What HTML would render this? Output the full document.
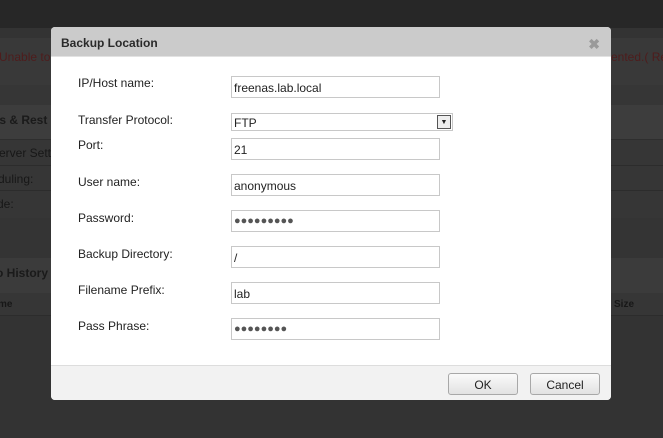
<!DOCTYPE html>
<html><head><style>
*{margin:0;padding:0;box-sizing:border-box}
body{width:663px;height:438px;overflow:hidden;background:#333;font-family:"Liberation Sans",sans-serif;position:relative}
.b{position:absolute;left:0;width:663px}
.t{position:absolute;font-size:12px;color:#171717;white-space:nowrap}
.dlg{position:absolute;left:51px;top:27px;width:560px;height:373px;background:#fff;border-radius:4px;overflow:hidden}
.hd{height:30px;background:#cbcbcb;border-bottom:1px solid #e2e2e2;font-weight:bold;font-size:12px;color:#2a2a2a;padding:9px 0 0 10px}
.x{position:absolute;right:11px;top:9px;color:#9a9a9a;font-size:14px;font-weight:bold}
.l{position:absolute;left:27px;font-size:12px;color:#222}
.i{position:absolute;left:180px;width:209px;height:22px;border:1px solid #c8c8c8;font-size:12px;color:#222;padding:4px 0 0 2px}
.ft{position:absolute;left:0;top:338px;width:560px;height:35px;background:#f2f2f2;border-top:1px solid #ddd}
.btn{position:absolute;top:7px;width:70px;height:22px;border:1px solid #a8a8a8;border-radius:3px;background:linear-gradient(#fafafa,#e2e2e2);font-size:12px;text-align:center;padding-top:4px;color:#222}
.d{font-size:11px;color:#555}
</style></head><body>
<div class="b" style="top:0;height:28px;background:#272727"></div>
<div class="b" style="top:38px;height:47px;background:#393939"></div>
<div class="b" style="top:85px;height:20px;background:#363636"></div>
<div class="b" style="top:105px;height:35px;background:#3d3d3d;border-bottom:1px solid #2e2e2e"></div>
<div class="b" style="top:140px;height:78px;background:#363636"></div>
<div class="b" style="top:165px;height:1px;background:#2c2c2c"></div>
<div class="b" style="top:190px;height:1px;background:#2c2c2c"></div>
<div class="b" style="top:218px;height:40px;background:#343434"></div>
<div class="b" style="top:258px;height:35px;background:#3b3b3b"></div>
<div class="b" style="top:293px;height:23px;background:#363636;border-bottom:1px solid #2c2c2c"></div>
<div class="t" style="left:-1px;top:50px;color:#4e1c1c">Unable to</div>
<div class="t" style="left:611px;top:50px;color:#4e1c1c">ented.( Re</div>
<div class="t" style="left:-8px;top:113px;font-weight:bold;color:#1a1a1a">os &amp; Rest</div>
<div class="t" style="left:-1px;top:146px">erver Sett</div>
<div class="t" style="left:-2px;top:172px">duling:</div>
<div class="t" style="left:-3px;top:197px">de:</div>
<div class="t" style="left:-4px;top:266px;font-weight:bold;color:#1a1a1a">o History</div>
<div class="t" style="left:-2px;top:299px;font-size:10px;font-weight:bold">me</div>
<div class="t" style="left:614px;top:299px;font-size:10px;font-weight:bold">Size</div>
<div class="dlg">
<div class="hd">Backup Location</div><div class="x">✖</div>
<div class="l" style="top:49px">IP/Host name:</div><div class="i" style="top:49px">freenas.lab.local</div>
<div class="l" style="top:86px">Transfer Protocol:</div>
<div class="i" style="top:86px;height:18px;width:222px;padding-top:2px">FTP<div style="position:absolute;right:1px;top:1px;width:14px;height:14px;border:1px solid #555;background:#eee;font-size:7px;text-align:center;line-height:13px">▼</div></div>
<div class="l" style="top:111px">Port:</div><div class="i" style="top:111px">21</div>
<div class="l" style="top:148px">User name:</div><div class="i" style="top:147px">anonymous</div>
<div class="l" style="top:184px">Password:</div><div class="i d" style="top:183px">●●●●●●●●●</div>
<div class="l" style="top:220px">Backup Directory:</div><div class="i" style="top:219px">/</div>
<div class="l" style="top:256px">Filename Prefix:</div><div class="i" style="top:255px">lab</div>
<div class="l" style="top:292px">Pass Phrase:</div><div class="i d" style="top:291px">●●●●●●●●</div>
<div class="ft"><div class="btn" style="left:397px">OK</div><div class="btn" style="left:479px">Cancel</div></div>
</div>
</body></html>
